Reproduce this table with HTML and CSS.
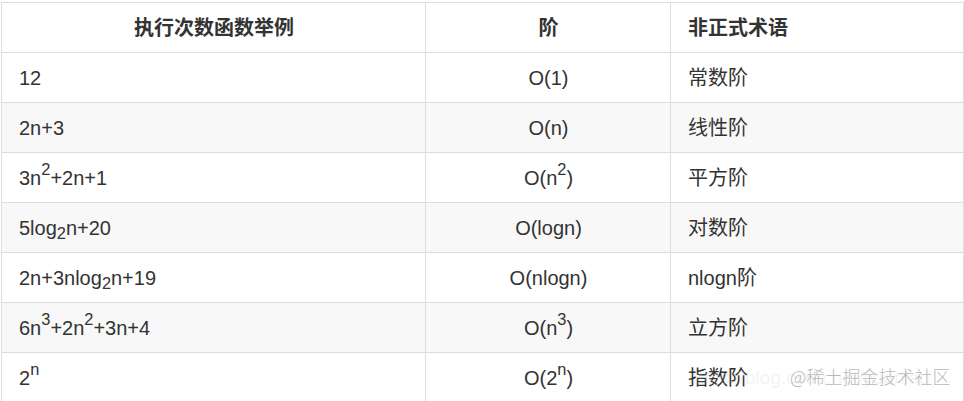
FILE: index.html
```html
<!DOCTYPE html>
<html lang="zh-CN">
<head>
<meta charset="utf-8">
<title>时间复杂度</title>
<link rel="stylesheet" href="styles.css">
</head>
<body>
<div class="wrap">
<table class="complexity">
  <colgroup>
    <col class="c1"><col class="c2"><col class="c3">
  </colgroup>
  <thead>
    <tr><th class="center">执行次数函数举例</th><th class="center">阶</th><th class="left">非正式术语</th></tr>
  </thead>
  <tbody>
    <tr><td>12</td><td class="center">O(1)</td><td>常数阶</td></tr>
    <tr><td>2n+3</td><td class="center">O(n)</td><td>线性阶</td></tr>
    <tr><td>3n<sup>2</sup>+2n+1</td><td class="center">O(n<sup>2</sup>)</td><td>平方阶</td></tr>
    <tr><td>5log<sub>2</sub>n+20</td><td class="center">O(logn)</td><td>对数阶</td></tr>
    <tr><td>2n+3nlog<sub>2</sub>n+19</td><td class="center">O(nlogn)</td><td>nlogn阶</td></tr>
    <tr><td>6n<sup>3</sup>+2n<sup>2</sup>+3n+4</td><td class="center">O(n<sup>3</sup>)</td><td>立方阶</td></tr>
    <tr><td>2<sup>n</sup></td><td class="center">O(2<sup>n</sup>)</td><td>指数阶</td></tr>
  </tbody>
</table>
<div class="wm-url">https://blog.csdn.net/yuanlao</div>
<div class="wm">@稀土掘金技术社区</div>
</div>
</body>
</html>
```
FILE: styles.css
```css
html, body {
  margin: 0;
  padding: 0;
  background: #fff;
  overflow: hidden;
}
.wrap {
  position: relative;
  padding: 2px 0 0 1px;
  width: 964px;
  height: 401px;
  box-sizing: border-box;
  overflow: hidden;
}
.complexity {
  border-collapse: collapse;
  table-layout: fixed;
  width: 962px;
  font-family: "Liberation Sans", Arial, "Noto Sans CJK SC", sans-serif;
  font-size: 20px;
  color: #333;
}
.c1 { width: 424px; }
.c2 { width: 245px; }
.c3 { width: 293px; }
.complexity th,
.complexity td {
  border: 1px solid #dddddd;
  height: 50px;
  padding: 0 16px 0 17px;
  box-sizing: border-box;
  vertical-align: middle;
  line-height: 24px;
  white-space: nowrap;
}
.complexity th {
  font-weight: bold;
  color: #333;
}
.complexity th.left { text-align: left; }
.center { text-align: center; }
.complexity td { text-align: left; }
.complexity td.center { text-align: center; }
.complexity tbody tr:nth-child(even) td { background: #f8f8f8; }
sup, sub {
  font-size: 82%;
  line-height: 0;
  position: relative;
  vertical-align: baseline;
}
sup { top: -0.55em; }
sub { bottom: -0.3em; }
.wm-url {
  position: absolute;
  left: 688px;
  top: 367px;
  font-family: "Liberation Sans", Arial, sans-serif;
  font-size: 19px;
  color: rgba(200, 200, 200, 0.22);
  white-space: nowrap;
}
.wm {
  position: absolute;
  left: 790px;
  top: 364px;
  font-family: "Noto Sans CJK SC", sans-serif;
  font-size: 18px;
  font-weight: 300;
  line-height: 24px;
  color: rgba(170, 170, 170, 0.85);
  text-shadow: 0 0 1px rgba(255, 255, 255, 0.9);
  white-space: nowrap;
}
```
